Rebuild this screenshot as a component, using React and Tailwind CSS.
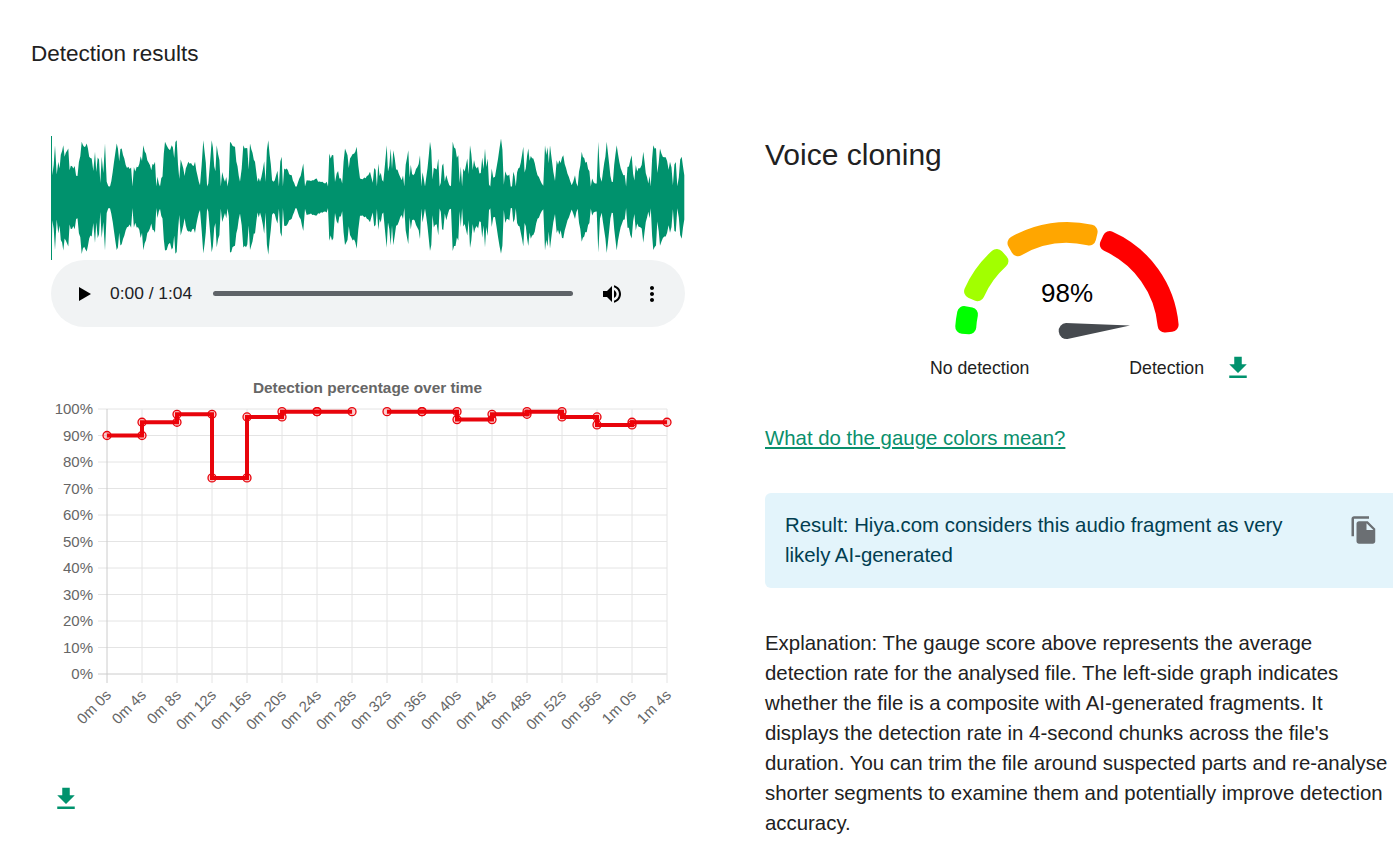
import { useMemo } from "react";

const GREEN = "#00926d";

// traced from the waveform: [x, top y] in zoomed (3x) reference coords
const leftPeaks = [[35,30],[37,150],[45,60],[55,110],[70,60],[85,70],[100,130],[125,50],[140,55],[155,100],[165,80],[185,95],[195,55],[200,170],[210,190],[230,55],[245,70],[265,125],[290,125],[310,60],[330,120],[345,110],[360,190],[375,50],[385,70],[395,60],[410,45],[430,130],[445,110],[465,110],[480,180],[490,45],[505,175],[515,45],[530,60],[555,170],[570,50],[585,65],[600,170],[610,60],[630,55],[645,110],[660,170],[685,45],[700,170],[725,95],[740,130],[755,150],[770,185],[790,115],[800,165],[830,160],[860,170],[868,85],[880,90],[890,145],[915,70],[930,100],[950,65],[960,160],[985,150]];
const rightPeaks = [[0,140],[25,115],[40,170],[50,60],[70,75],[95,165],[115,75],[130,150],[150,90],[165,185],[180,50],[195,130],[205,100],[220,115],[238,180],[248,50],[265,90],[280,130],[300,60],[320,130],[345,70],[365,130],[375,155],[393,40],[410,150],[430,140],[445,130],[460,65],[475,70],[490,100],[515,175],[525,60],[540,60],[550,140],[560,105],[580,90],[605,180],[615,150],[635,80],[650,110],[675,175],[685,50],[695,170],[710,50],[725,170],[740,60],[760,150],[785,90],[810,130],[820,80],[835,175],[850,60],[870,70],[900,110],[935,95],[943,150]];

function buildWave() {
  const peaks = [
    ...leftPeaks.map(([x, y]) => [40 + x / 3, (217 - y) / 3]),
    ...rightPeaks.map(([x, y]) => [370 + x / 3, (217 - y) / 3]),
  ];
  // small seeded generator so the jagged edge is the same every render
  let seed = 1337;
  const rand = () => {
    seed = (seed * 16807) % 2147483647;
    return seed / 2147483647;
  };
  const samples = [];
  for (let i = 0; i < peaks.length - 1; i++) {
    const [x1, a1] = peaks[i];
    const [x2, a2] = peaks[i + 1];
    const steps = Math.max(1, Math.round((x2 - x1) / 1.4));
    for (let s = 0; s < steps; s++) {
      const t = s / steps;
      const base = a1 + (a2 - a1) * t;
      // little teeth below the traced line, fairly often a deep notch
      const notch = rand() < 0.3 ? 6 + rand() * 22 : rand() * 6;
      const drop = s === 0 ? 0 : base > 24 ? notch : rand() * 3;
      samples.push([x1 + (x2 - x1) * t, Math.max(11, base - drop)]);
    }
  }
  samples.push(peaks[peaks.length - 1]);
  const top = samples.map(([x, a]) => `${x.toFixed(1)},${(197.5 - a).toFixed(1)}`);
  const bottom = samples
    .slice()
    .reverse()
    .map(([x, a]) => `${x.toFixed(1)},${(197.5 + a * (0.95 + rand() * 0.07)).toFixed(1)}`);
  return [...top, ...bottom].join(" ");
}

const yForPct = (p) => 674 - p * 2.65;
const xForIdx = (i) => 107 + i * 35;

const xLabels = ["0m 0s","0m 4s","0m 8s","0m 12s","0m 16s","0m 20s","0m 24s","0m 28s","0m 32s","0m 36s","0m 40s","0m 44s","0m 48s","0m 52s","0m 56s","1m 0s","1m 4s"];
const yLabels = [0, 10, 20, 30, 40, 50, 60, 70, 80, 90, 100];

// each chunk is [startIdx, endIdx, percent], the 28s-32s chunk has no data
const chunks = [[0,1,90],[1,2,95],[2,3,98],[3,4,74],[4,5,97],[5,6,99],[6,7,99],[8,9,99],[9,10,99],[10,11,96],[11,12,98],[12,13,99],[13,14,97],[14,15,94],[15,16,95]];

function chartLine(list) {
  return list
    .flatMap(([a, b, p]) => [`${xForIdx(a)},${yForPct(p)}`, `${xForIdx(b)},${yForPct(p)}`])
    .join(" ");
}

function DetectionChart() {
  const firstPart = chunks.slice(0, 7);
  const secondPart = chunks.slice(7);
  return (
    <svg width="634" height="380" viewBox="51 375 634 380" className="block">
      <text x="367.5" y="393" textAnchor="middle" fontSize="15.4" fontWeight="700" fill="#666" fontFamily="Liberation Sans, Arial, sans-serif">
        Detection percentage over time
      </text>
      {yLabels.map((p) => (
        <g key={p}>
          <line x1="98" x2="667" y1={yForPct(p)} y2={yForPct(p)} stroke={p === 0 ? "#ccc" : "#e4e4e4"} />
          <text x="93" y={yForPct(p) + 5} textAnchor="end" fontSize="15" fill="#666" fontFamily="Liberation Sans, Arial, sans-serif">
            {p}%
          </text>
        </g>
      ))}
      {xLabels.map((label, i) => (
        <g key={label}>
          <line x1={xForIdx(i)} x2={xForIdx(i)} y1="409" y2="683" stroke={i === 0 ? "#ccc" : "#e4e4e4"} />
          <text
            transform={`translate(${xForIdx(i) + 5} 696) rotate(-45)`}
            textAnchor="end"
            fontSize="15"
            fill="#666"
            fontFamily="Liberation Sans, Arial, sans-serif"
          >
            {label}
          </text>
        </g>
      ))}
      <polyline points={chartLine(firstPart)} fill="none" stroke="#e8040c" strokeWidth="4" />
      <polyline points={chartLine(secondPart)} fill="none" stroke="#e8040c" strokeWidth="4" />
      {chunks.flatMap(([a, b, p]) =>
        [a, b].map((i) => (
          <circle key={`${a}-${i}`} cx={xForIdx(i)} cy={yForPct(p)} r="4" fill="#ff000033" stroke="#e8040c" strokeWidth="1.3" />
        ))
      )}
    </svg>
  );
}

function DownloadIcon() {
  return (
    <svg width="30" height="30" viewBox="0 0 24 24" fill={GREEN} className="block">
      <path d="M19 9h-4V3H9v6H5l7 7 7-7zM5 18v2h14v-2H5z" />
    </svg>
  );
}

function AudioBar() {
  return (
    <div className="flex h-[67px] items-center rounded-[34px] bg-[#f1f3f4] pl-[28px]">
      <svg width="12" height="14" viewBox="0 0 12 14" className="block shrink-0">
        <path d="M0 0l12 7-12 7z" fill="#000" />
      </svg>
      <span className="ml-[19px] w-[82px] whitespace-nowrap text-[17.4px] text-[#202124]">0:00 / 1:04</span>
      <div className="ml-[21px] h-[5px] w-[360px] rounded-full bg-[#5f6368]" />
      <svg width="24" height="24" viewBox="0 0 24 24" className="ml-[27px] block shrink-0">
        <path d="M3 9v6h4l5 5V4L7 9H3zm13.5 3c0-1.77-1.02-3.29-2.5-4.03v8.05c1.48-.73 2.5-2.25 2.5-4.02zM14 3.23v2.06c2.89.86 5 3.54 5 6.71s-2.11 5.85-5 6.71v2.06c4.01-.91 7-4.49 7-8.77s-2.99-7.86-7-8.77z" fill="#000" />
      </svg>
      <svg width="24" height="24" viewBox="0 0 24 24" className="ml-[16px] block shrink-0">
        <path d="M12 8c1.1 0 2-.9 2-2s-.9-2-2-2-2 .9-2 2 .9 2 2 2zm0 2c-1.1 0-2 .9-2 2s.9 2 2 2 2-.9 2-2-.9-2-2-2zm0 6c-1.1 0-2 .9-2 2s.9 2 2 2 2-.9 2-2-.9-2-2-2z" fill="#000" />
      </svg>
    </div>
  );
}

// ring segment, angles in degrees counted clockwise from the left end of the gauge
function ringSegment(from, to) {
  const cx = 120;
  const cy = 119;
  const outer = 105;
  const inner = 98;
  const pt = (r, a) => {
    const rad = (a * Math.PI) / 180;
    return `${(cx - r * Math.cos(rad)).toFixed(2)} ${(cy - r * Math.sin(rad)).toFixed(2)}`;
  };
  return `M${pt(outer, from)} A${outer} ${outer} 0 0 1 ${pt(outer, to)} L${pt(inner, to)} A${inner} ${inner} 0 0 0 ${pt(inner, from)} Z`;
}

const gaugeParts = [
  [4, 11.5, "#00ff00"],
  [24, 48, "#a2ff00"],
  [60, 103, "#ffa600"],
  [114, 175, "#ff0000"],
];

function Gauge() {
  return (
    <svg width="240" height="130" viewBox="0 0 240 130" className="ml-[182px] block">
      {gaugeParts.map(([from, to, color]) => (
        <path key={color} d={ringSegment(from, to)} fill={color} stroke={color} strokeWidth="14" strokeLinejoin="round" />
      ))}
      <text x="120" y="87" textAnchor="middle" fontSize="26" fill="#000" fontFamily="Liberation Sans, Arial, sans-serif">
        98%
      </text>
      <path d="M183 110.5L119 108a8 8 0 0 0 1.5 16z" fill="#464a4f" />
    </svg>
  );
}

export default function App() {
  const wavePoints = useMemo(buildWave, []);

  return (
    <div className="h-[847px] overflow-hidden bg-white pl-[31px] pt-[41px] font-['Liberation_Sans',Arial,sans-serif] text-[#212121]">
      <h1 className="text-[22.5px] leading-[26px]">Detection results</h1>

      <div className="mt-[69px] flex">
        <div className="ml-[20px] w-[634px] shrink-0">
          <svg width="634" height="124" viewBox="51 136 634 124" className="block">
            <rect x="51" y="136" width="1" height="124" fill={GREEN} />
            <polygon points={wavePoints} fill={GREEN} />
          </svg>
          <AudioBar />
          <div className="mt-[48px]">
            <DetectionChart />
          </div>
          <div className="mt-[29px]">
            <DownloadIcon />
          </div>
        </div>

        <div className="ml-[80px] w-[628px] shrink-0">
          <h2 className="pt-[1px] text-[30px] leading-[36px]">Voice cloning</h2>
          <div className="mt-[42px]">
            <Gauge />
          </div>
          <div className="mt-[10px] flex h-[26px] items-center text-[17.7px]">
            <span className="ml-[165px]">No detection</span>
            <span className="ml-[100px]">Detection</span>
            <span className="ml-[19px]">
              <DownloadIcon />
            </span>
          </div>
          <a href="#" className="mt-[42px] block text-[20.4px] leading-[30px] text-[#0a8f6c] underline">
            What do the gauge colors mean?
          </a>
          <div className="mt-[40px] flex h-[95px] items-start rounded-l-[6px] bg-[#e3f4fb] pl-[20px] pt-[17px]">
            <p className="w-[540px] text-[20.4px] leading-[30px] text-[#013e51]">
              Result: Hiya.com considers this audio fragment as very likely AI-generated
            </p>
            <svg width="30" height="30" viewBox="0 0 24 24" className="ml-[24px] mt-[5px] shrink-0" fill="#6b6f73">
              <path d="M16 1H4c-1.1 0-2 .9-2 2v14h2V3h12V1zm-1 4l6 6v10c0 1.1-.9 2-2 2H7.99C6.89 23 6 22.1 6 21l.01-14c0-1.1.89-2 1.99-2h7zm-1 7h5.5L14 6.5V12z" />
            </svg>
          </div>
          <p className="mt-[40px] text-[20.4px] leading-[30px]">
            Explanation: The gauge score above represents the average detection rate for the analysed file. The left-side graph indicates whether the file is a composite with AI-generated fragments. It displays the detection rate in 4-second chunks across the file's duration. You can trim the file around suspected parts and re-analyse shorter segments to examine them and potentially improve detection accuracy.
          </p>
        </div>
      </div>
    </div>
  );
}
